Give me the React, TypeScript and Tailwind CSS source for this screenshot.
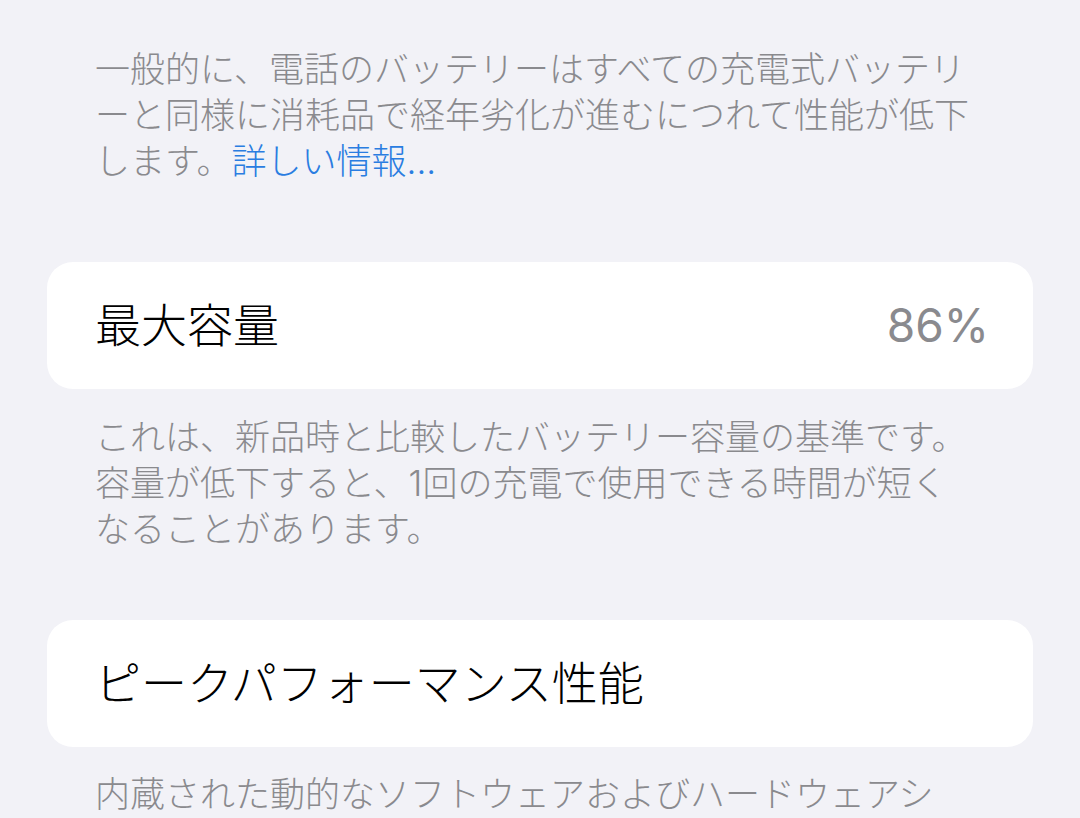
const Footer = ({ lines }: { lines: React.ReactNode[] }) => {
  return (
    <div className="px-[95px] text-[35px] leading-[46px] font-light text-[#8a8a8e] whitespace-nowrap">
      {lines.map((line, i) => (
        <div key={i}>{line}</div>
      ))}
    </div>
  );
};

const Card = ({ title, value }: { title: string; value?: string }) => {
  return (
    <div className="mx-[47px] h-[127px] rounded-[26px] bg-white pl-[48px] pr-[44px] flex items-center justify-between">
      <span className="text-[46px] font-light text-black">{title}</span>
      {value && <span className="text-[46px] font-normal text-[#8a8a8e]">{value}</span>}
    </div>
  );
};

export default function App() {
  return (
    <div
      className="w-[1080px] h-[818px] overflow-hidden bg-[#f2f2f7] pt-[46px]"
      style={{ fontFamily: 'Inter, "Noto Sans CJK JP", sans-serif' }}
    >
      <Footer
        lines={[
          "一般的に、電話のバッテリーはすべての充電式バッテリ",
          "ーと同様に消耗品で経年劣化が進むにつれて性能が低下",
          <>
            します。<span className="text-[#2a7de1]">詳しい情報...</span>
          </>,
        ]}
      />
      <div className="mt-[78px]">
        <Card title="最大容量" value="86%" />
      </div>
      <div className="mt-[25px]">
        <Footer
          lines={[
            "これは、新品時と比較したバッテリー容量の基準です。",
            "容量が低下すると、1回の充電で使用できる時間が短く",
            "なることがあります。",
          ]}
        />
      </div>
      <div className="mt-[68px]">
        <Card title="ピークパフォーマンス性能" />
      </div>
      <div className="mt-[24px]">
        <Footer lines={["内蔵された動的なソフトウェアおよびハードウェアシ"]} />
      </div>
    </div>
  );
}
